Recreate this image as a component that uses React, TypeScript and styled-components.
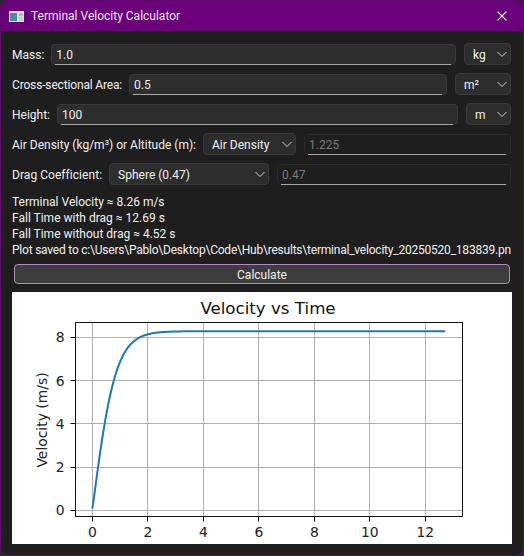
import { createGlobalStyle, styled } from 'styled-components'
import { VscChromeClose } from 'react-icons/vsc'

const GlobalStyle = createGlobalStyle`
  html, body {
    margin: 0;
    padding: 0;
    background: #2b2b2b;
  }
`

const Window = styled.div`
  width: 524px;
  height: 556px;
  box-sizing: border-box;
  background: #1e1e1e;
  border: 1px solid #5e0a6e;
  border-radius: 8px;
  overflow: hidden;
  display: flex;
  flex-direction: column;
  font-family: Roboto, sans-serif;
  font-size: 12px;
  color: #f2f2f2;
`

const TitleBar = styled.div`
  height: 30px;
  flex: none;
  background: #6a007a;
  display: flex;
  align-items: center;
  padding: 0 14px 0 8px;
  gap: 7px;
`

const TitleText = styled.span`
  flex: 1;
  color: #f0e4f3;
`

const CloseIcon = styled(VscChromeClose)`
  width: 14px;
  height: 14px;
  color: #fff;
`

const Content = styled.div`
  flex: 1;
  display: flex;
  flex-direction: column;
  padding: 12px 12px 11px 11px;
`

const Row = styled.div`
  display: flex;
  align-items: center;
  height: 22px;
  margin-bottom: 8px;
  gap: 7px;
`

const Label = styled.span<{ $spacing?: number }>`
  white-space: nowrap;
  padding-top: 1px;
  letter-spacing: ${(p) => p.$spacing ?? 0}px;
`

const Field = styled.div<{ $disabled?: boolean }>`
  flex: 1;
  min-width: 0;
  height: 21px;
  box-sizing: border-box;
  position: relative;
  border: 1px solid ${(p) => (p.$disabled ? '#2b2b2b' : '#3a3a3a')};
  border-radius: 4px;
  background: ${(p) => (p.$disabled ? '#1e1e1e' : '#2d2d2d')};
  color: ${(p) => (p.$disabled ? '#7a7a7a' : '#f2f2f2')};
  padding: 0 4px;
  line-height: 20px;
  &:not(:last-child) {
    margin-right: 1px;
  }
  &::after {
    content: '';
    position: absolute;
    left: 3px;
    right: 4px;
    bottom: -1px;
    height: 1px;
    background: #a8a8a8;
  }
`

const Combo = styled.div<{ $width: number }>`
  width: ${(p) => p.$width}px;
  flex: none;
  height: 22px;
  box-sizing: border-box;
  border: 1px solid #3a3a3a;
  border-radius: 4px;
  background: #2d2d2d;
  display: flex;
  align-items: center;
  justify-content: space-between;
  padding: 1px 2px 0 8px;
  &:not(:last-child) {
    margin-right: 1px;
  }
`

const Chevron = styled.svg`
  width: 12px;
  height: 12px;
  flex: none;
  margin-top: -1px;
  fill: none;
  stroke: #c8d8e8;
  stroke-width: 1;
`

const Results = styled.div`
  line-height: 16px;
  margin-top: 1px;
  white-space: nowrap;
  overflow: hidden;
  width: 499px;
`

const PathLine = styled.div`
  letter-spacing: -0.22px;
`

const CalcButton = styled.button`
  height: 20px;
  flex: none;
  margin: 6px 1px 0 2px;
  box-sizing: border-box;
  border: 1px solid #b58cc0;
  border-radius: 4px;
  background: #3d3d3d;
  color: #f2f2f2;
  font: inherit;
  padding: 1px 0 0;
`

const Plot = styled.svg`
  display: block;
  flex: none;
  width: 500px;
  height: 252px;
  margin-top: 8px;
  background: #fff;
  font-family: 'DejaVu Sans', sans-serif;
`

const DropArrow = () => (
  <Chevron viewBox="0 0 12 12">
    <path d="M1.5 4 L6 8.5 L10.5 4" />
  </Chevron>
)

const xTicks = [0, 2, 4, 6, 8, 10, 12]
const yTicks = [0, 2, 4, 6, 8]

// plot coordinates are relative to the white figure
const X0 = 80.3
const XU = 27.75
const Y0 = 218.3
const YU = 21.63
const VT = 8.28
const AX = { left: 63.5, right: 450.5, top: 30.5, bottom: 224.5 }
const px = (t: number) => X0 + XU * t
const py = (v: number) => Y0 - YU * v
const crisp = (n: number) => Math.floor(n) + 0.5

const curve = () => {
  const pts: string[] = []
  for (let t = 0; t <= 12.69; t += 0.06) {
    const v = VT * Math.tanh((9.81 * t) / VT)
    pts.push(`${px(t).toFixed(2)},${py(Math.max(v, 0.08)).toFixed(3)}`)
  }
  pts.push(`${px(12.72).toFixed(2)},${py(VT).toFixed(3)}`)
  return pts.join(' ')
}

const App = () => (
  <>
    <GlobalStyle />
    <Window>
      <TitleBar>
        <svg width="15" height="11" viewBox="0 0 15 11">
          <rect width="15" height="11" fill="#d8dfdf" />
          <rect x="1" y="2" width="7" height="8" fill="#4f8f96" />
          <rect x="10" y="2" width="4" height="3" fill="#a8bcc0" />
          <rect x="10" y="6" width="4" height="4" fill="#c4d0d0" />
        </svg>
        <TitleText>Terminal Velocity Calculator</TitleText>
        <CloseIcon />
      </TitleBar>
      <Content>
        <Row>
          <Label>Mass:</Label>
          <Field>1.0</Field>
          <Combo $width={47}>
            kg
            <DropArrow />
          </Combo>
        </Row>
        <Row>
          <Label $spacing={-0.16}>Cross-sectional Area:</Label>
          <Field>0.5</Field>
          <Combo $width={56}>
            m²
            <DropArrow />
          </Combo>
        </Row>
        <Row>
          <Label>Height:</Label>
          <Field>100</Field>
          <Combo $width={45}>
            m
            <DropArrow />
          </Combo>
        </Row>
        <Row>
          <Label>Air Density (kg/m³) or Altitude (m):</Label>
          <Combo $width={93}>
            Air Density
            <DropArrow />
          </Combo>
          <Field $disabled>1.225</Field>
        </Row>
        <Row>
          <Label $spacing={0.05}>Drag Coefficient:</Label>
          <Combo $width={160}>
            Sphere (0.47)
            <DropArrow />
          </Combo>
          <Field $disabled>0.47</Field>
        </Row>
        <Results>
          <div>Terminal Velocity ≈ 8.26 m/s</div>
          <div>Fall Time with drag ≈ 12.69 s</div>
          <div>Fall Time without drag ≈ 4.52 s</div>
          <PathLine>Plot saved to c:\Users\Pablo\Desktop\Code\Hub\results\terminal_velocity_20250520_183839.png</PathLine>
        </Results>
        <CalcButton>Calculate</CalcButton>
        <Plot viewBox="0 0 500 252">
          <text x="256" y="22" fontSize="16.67" textAnchor="middle" fill="#111">
            Velocity vs Time
          </text>
          {xTicks.map((t) => (
            <g key={t}>
              <line x1={crisp(px(t))} x2={crisp(px(t))} y1={AX.top} y2={AX.bottom} stroke="#b0b0b0" />
              <line x1={crisp(px(t))} x2={crisp(px(t))} y1={AX.bottom} y2={AX.bottom + 5} stroke="#111" />
              <text x={px(t)} y={AX.bottom + 20} fontSize="13.9" textAnchor="middle" fill="#222">
                {t}
              </text>
            </g>
          ))}
          {yTicks.map((v) => (
            <g key={v}>
              <line x1={AX.left} x2={AX.right} y1={crisp(py(v))} y2={crisp(py(v))} stroke="#b0b0b0" />
              <line x1={AX.left - 5} x2={AX.left} y1={crisp(py(v))} y2={crisp(py(v))} stroke="#111" />
              <text x={AX.left - 11} y={py(v) + 5} fontSize="13.9" textAnchor="end" fill="#222">
                {v}
              </text>
            </g>
          ))}
          <polyline points={curve()} fill="none" stroke="#1f77b4" strokeWidth="2" />
          <rect
            x={AX.left}
            y={AX.top}
            width={AX.right - AX.left}
            height={AX.bottom - AX.top}
            fill="none"
            stroke="#111"
          />
          <text
            transform="translate(35 128) rotate(-90)"
            fontSize="13.9"
            textAnchor="middle"
            fill="#222"
          >
            Velocity (m/s)
          </text>
        </Plot>
      </Content>
    </Window>
  </>
)

export default App
